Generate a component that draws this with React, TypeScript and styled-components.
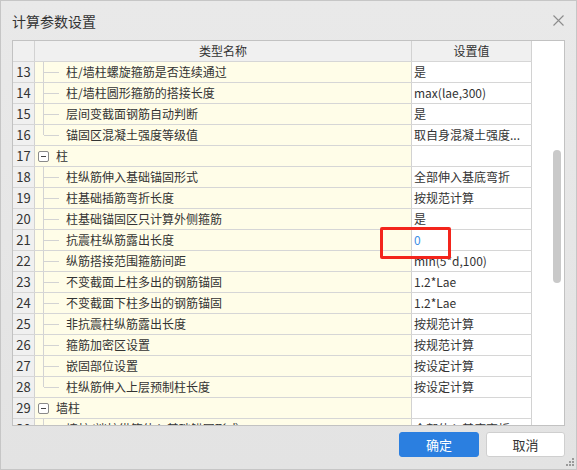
import * as React from "react";
import styled, { createGlobalStyle } from "styled-components";

const GlobalStyle = createGlobalStyle`
  html, body {
    margin: 0;
    padding: 0;
    background: #e6e6e6;
  }
  body {
    font-family: "Noto Sans CJK SC", "Noto Sans", sans-serif;
    color: #333;
  }
`;

type RowKind = "child" | "last" | "group";

interface Row {
  n: number;
  name: string;
  value: string;
  kind: RowKind;
  blue?: boolean;
}

const rows: Row[] = [
  { n: 13, name: "柱/墙柱螺旋箍筋是否连续通过", value: "是", kind: "child" },
  { n: 14, name: "柱/墙柱圆形箍筋的搭接长度", value: "max(lae,300)", kind: "child" },
  { n: 15, name: "层间变截面钢筋自动判断", value: "是", kind: "child" },
  { n: 16, name: "锚固区混凝土强度等级值", value: "取自身混凝土强度...", kind: "last" },
  { n: 17, name: "柱", value: "", kind: "group" },
  { n: 18, name: "柱纵筋伸入基础锚固形式", value: "全部伸入基底弯折", kind: "child" },
  { n: 19, name: "柱基础插筋弯折长度", value: "按规范计算", kind: "child" },
  { n: 20, name: "柱基础锚固区只计算外侧箍筋", value: "是", kind: "child" },
  { n: 21, name: "抗震柱纵筋露出长度", value: "0", kind: "child", blue: true },
  { n: 22, name: "纵筋搭接范围箍筋间距", value: "min(5*d,100)", kind: "child" },
  { n: 23, name: "不变截面上柱多出的钢筋锚固", value: "1.2*Lae", kind: "child" },
  { n: 24, name: "不变截面下柱多出的钢筋锚固", value: "1.2*Lae", kind: "child" },
  { n: 25, name: "非抗震柱纵筋露出长度", value: "按规范计算", kind: "child" },
  { n: 26, name: "箍筋加密区设置", value: "按规范计算", kind: "child" },
  { n: 27, name: "嵌固部位设置", value: "按设定计算", kind: "child" },
  { n: 28, name: "柱纵筋伸入上层预制柱长度", value: "按设定计算", kind: "last" },
  { n: 29, name: "墙柱", value: "", kind: "group" },
  { n: 30, name: "墙柱/端柱纵筋伸入基础锚固形式", value: "全部伸入基底弯折", kind: "child" },
];

const Window = styled.div`
  position: relative;
  box-sizing: border-box;
  width: 577px;
  height: 470px;
  border: 1px solid #c6c6c6;
  background: linear-gradient(#e9e9e9, #e3e3e3);
  display: flex;
  flex-direction: column;
  padding: 0 11px;
  overflow: hidden;
`;

const TitleBar = styled.div`
  height: 39px;
  display: flex;
  align-items: center;
  justify-content: space-between;
`;

const Title = styled.div`
  font-size: 14px;
  color: #333;
  padding-top: 1px;
`;

const CloseIcon = styled.svg`
  width: 11px;
  height: 11px;
  margin-right: 1px;
`;

const Frame = styled.div`
  display: flex;
  height: 386px;
  box-sizing: border-box;
  border: 1px solid #c2c2c2;
  background: #fff;
  overflow: hidden;
`;

const Grid = styled.div`
  width: 519px;
  display: flex;
  flex-direction: column;
  overflow: hidden;
`;

const RowLine = styled.div`
  display: flex;
  flex: none;
  height: 21px;
  box-sizing: border-box;
  border-bottom: 1px solid #d6d6d6;
  font-size: 12px;
  line-height: 20px;
`;

const NumCell = styled.div<{ $head?: boolean }>`
  width: 22px;
  box-sizing: border-box;
  border-right: 1px solid #d2d2d2;
  background: #f0f0f0;
  text-align: center;
  color: #333;
  font-size: 13px;
`;

const NameCell = styled.div<{ $head?: boolean }>`
  position: relative;
  width: 377px;
  box-sizing: border-box;
  border-right: 1px solid #d2d2d2;
  background: ${({ $head }) => ($head ? "#f0f0f0" : "#fffde8")};
  display: flex;
  align-items: center;
  justify-content: ${({ $head }) => ($head ? "center" : "flex-start")};
  white-space: nowrap;
  overflow: hidden;
`;

const ValueCell = styled.div<{ $head?: boolean; $blue?: boolean }>`
  width: 120px;
  box-sizing: border-box;
  border-right: 1px solid #d2d2d2;
  background: ${({ $head }) => ($head ? "#f0f0f0" : "#fff")};
  text-align: ${({ $head }) => ($head ? "center" : "left")};
  padding-left: ${({ $head }) => ($head ? "0" : "2px")};
  color: ${({ $blue }) => ($blue ? "#3b8ee5" : "#333")};
  white-space: nowrap;
  overflow: hidden;
`;

const TreeV = styled.div<{ $half?: boolean }>`
  position: absolute;
  left: 8px;
  top: 0;
  width: 1px;
  height: ${({ $half }) => ($half ? "10px" : "21px")};
  background: #d3d3d3;
`;

const TreeH = styled.div`
  position: absolute;
  left: 9px;
  top: 10px;
  width: 15px;
  height: 1px;
  background: #d3d3d3;
`;

const ChildText = styled.span`
  margin-left: 31px;
`;

const GroupBox = styled.div`
  flex: none;
  width: 11px;
  height: 11px;
  box-sizing: border-box;
  margin-left: 3px;
  margin-right: 7px;
  border: 1px solid #8a8a8a;
  border-radius: 2px;
  background: #fff;
  display: flex;
  align-items: center;
  justify-content: center;
  &::after {
    content: "";
    width: 5px;
    height: 1px;
    background: #444;
  }
`;

const Gutter = styled.div`
  width: 32px;
  display: flex;
  justify-content: flex-end;
  padding: 109px 3px 0 0;
  box-sizing: border-box;
`;

const Thumb = styled.div`
  width: 8px;
  height: 133px;
  border-radius: 4px;
  background: #c9c9c9;
`;

const Footer = styled.div`
  display: flex;
  justify-content: flex-end;
  gap: 7px;
  margin-top: 6px;
`;

const Button = styled.button<{ $primary?: boolean }>`
  width: ${({ $primary }) => ($primary ? "80px" : "79px")};
  height: 25px;
  box-sizing: border-box;
  border-radius: 3px;
  border: 1px solid ${({ $primary }) => ($primary ? "#2b7fe0" : "#cfcfcf")};
  background: ${({ $primary }) => ($primary ? "#2b7fe0" : "#fff")};
  color: ${({ $primary }) => ($primary ? "#fff" : "#333")};
  font-family: "Noto Sans CJK SC", "Noto Sans", sans-serif;
  font-size: 13px;
  padding: 0;
`;

const Highlight = styled.div`
  position: absolute;
  left: 379px;
  top: 226px;
  width: 71px;
  height: 32px;
  box-sizing: border-box;
  border: 3px solid #f3251c;
  border-radius: 2px;
`;

const Grip = styled.svg`
  position: absolute;
  right: 2px;
  bottom: 3px;
  width: 9px;
  height: 9px;
`;

const NameContent: React.FunctionComponent<{ row: Row }> = ({ row }) => {
  if (row.kind === "group") {
    return (
      <>
        <GroupBox />
        <span>{row.name}</span>
      </>
    );
  }
  return (
    <>
      <TreeV $half={row.kind === "last"} />
      <TreeH />
      <ChildText>{row.name}</ChildText>
    </>
  );
};

export default function App() {
  return (
    <>
      <GlobalStyle />
      <Window>
        <TitleBar>
          <Title>计算参数设置</Title>
          <CloseIcon viewBox="0 0 11 11">
            <path d="M0.5 0.5 L10.5 10.5 M10.5 0.5 L0.5 10.5" stroke="#8c8c8c" strokeWidth="1.1" fill="none" />
          </CloseIcon>
        </TitleBar>
        <Frame>
          <Grid>
            <RowLine>
              <NumCell $head />
              <NameCell $head>类型名称</NameCell>
              <ValueCell $head>设置值</ValueCell>
            </RowLine>
            {rows.map((r) => (
              <RowLine key={r.n}>
                <NumCell>{r.n}</NumCell>
                <NameCell>
                  <NameContent row={r} />
                </NameCell>
                <ValueCell $blue={r.blue}>{r.value}</ValueCell>
              </RowLine>
            ))}
          </Grid>
          <Gutter>
            <Thumb />
          </Gutter>
        </Frame>
        <Footer>
          <Button $primary>确定</Button>
          <Button>取消</Button>
        </Footer>
        <Highlight />
        <Grip viewBox="0 0 9 9">
          <rect x="7" y="1" width="2" height="2" fill="#9a9a9a" />
          <rect x="4" y="4" width="2" height="2" fill="#9a9a9a" />
          <rect x="7" y="4" width="2" height="2" fill="#9a9a9a" />
          <rect x="1" y="7" width="2" height="2" fill="#9a9a9a" />
          <rect x="4" y="7" width="2" height="2" fill="#9a9a9a" />
          <rect x="7" y="7" width="2" height="2" fill="#9a9a9a" />
        </Grip>
      </Window>
    </>
  );
}
